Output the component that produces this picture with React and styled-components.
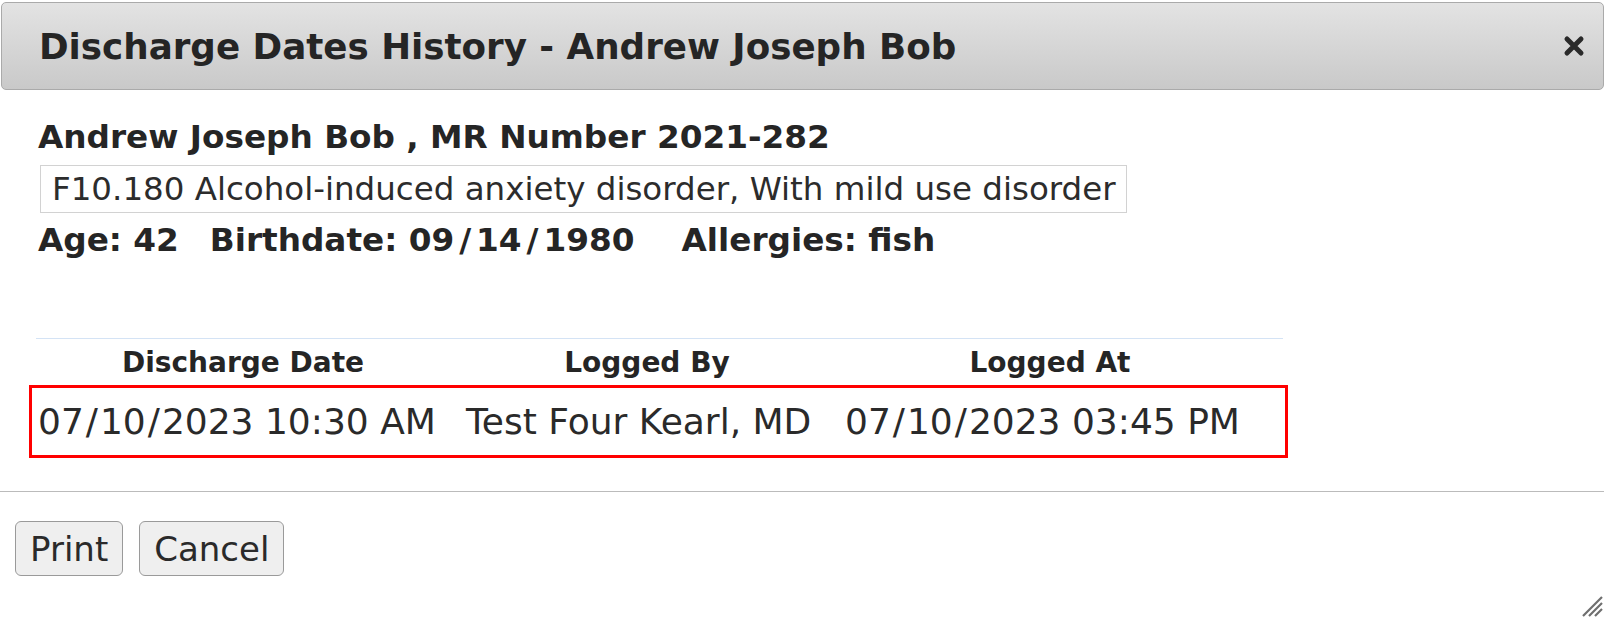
import React from "react";
import styled, { createGlobalStyle } from "styled-components";

const Global = createGlobalStyle`
  html, body { margin: 0; padding: 0; background: #fff; }
  body { font-family: "DejaVu Sans", Verdana, sans-serif; color: #222; }
`;

const Dialog = styled.div`
  width: 1604px;
  height: 618px;
  position: relative;
  display: flex;
  flex-direction: column;
  background: #fff;
`;

const TitleBar = styled.div`
  margin: 2px 0 0 1px;
  height: 86px;
  border: 1px solid #aaa;
  border-radius: 5px;
  background: linear-gradient(#e3e3e3, #c9c9c9);
  display: flex;
  align-items: center;
  justify-content: space-between;
  padding: 0 18px 0 37px;
`;

const Title = styled.div`
  font-size: 35.7px;
  font-weight: bold;
  color: #252525;
  white-space: nowrap;
`;

const CloseBtn = styled.button`
  border: 0;
  background: transparent;
  padding: 0;
  width: 22px;
  height: 22px;
  display: flex;
  cursor: pointer;
`;

const Body = styled.div`
  padding: 28px 0 0 38px;
  display: flex;
  flex-direction: column;
  align-items: flex-start;
`;

const BoldLine = styled.div`
  font-size: 32.7px;
  font-weight: bold;
  line-height: 38px;
  color: #252525;
  display: flex;
  white-space: nowrap;
  margin-top: ${(p) => p.$top || 0}px;
`;

const Spaced = styled.span`
  margin-right: ${(p) => p.$gap || 0}px;
`;

const Slash = styled.span`
  margin: 0 ${(p) => p.$m}px;
`;

const DiagBox = styled.div`
  margin: 9px 0 0 2px;
  width: 1074px;
  height: 46px;
  border: 1px solid #d2d2d2;
  padding-left: 11px;
  font-size: 32.5px;
  line-height: 46px;
  color: #2c2c2c;
  white-space: nowrap;
`;

const Table = styled.div`
  margin-top: 79px;
  margin-left: -2px;
  width: 1247px;
  border-top: 1px solid #d4e3f5;
`;

const HeadRow = styled.div`
  display: grid;
  grid-template-columns: 414px 394px 412px;
  height: 46px;
  align-items: center;
`;

const HeadCell = styled.div`
  text-align: center;
  font-size: 28px;
  font-weight: bold;
  color: #252525;
  white-space: nowrap;
`;

const DataRow = styled.div`
  display: grid;
  grid-template-columns: 414px 394px 412px;
  margin: 0 -5px 0 -7px;
  border: 3px solid #ff0000;
  padding: 0 2px 0 4px;
  height: 67px;
  align-items: center;
`;

const DataCell = styled.div`
  font-size: 36px;
  color: #2a2a2a;
  white-space: nowrap;
  padding-left: ${(p) => p.$pad}px;
`;

const Separator = styled.div`
  margin-top: 33px;
  height: 1px;
  background: #bbbbbb;
`;

const Footer = styled.div`
  display: flex;
  gap: 16px;
  padding: 29px 0 0 15px;
`;

const Button = styled.button`
  font-family: "DejaVu Sans", sans-serif;
  font-size: 34px;
  color: #2a2a2a;
  background: #efefef;
  border: 1px solid #9a9a9a;
  border-radius: 6px;
  height: 55px;
  padding: 0 14px;
  line-height: 1;
`;

const Grip = styled.svg`
  position: absolute;
  right: 1px;
  bottom: 1px;
`;

function Dated({ text, m }) {
  const parts = text.split("/");
  return parts.map((p, i) => (
    <React.Fragment key={i}>
      {p}
      {i < parts.length - 1 && <Slash $m={m}>/</Slash>}
    </React.Fragment>
  ));
}

export default function App() {
  return (
    <>
      <Global />
      <Dialog>
        <TitleBar>
          <Title>Discharge Dates History - Andrew Joseph Bob</Title>
          <CloseBtn aria-label="close">
            <svg width="22" height="22" viewBox="0 0 22 22">
              <path d="M4 4 L18 18 M18 4 L4 18" stroke="#2a2a2a" strokeWidth="5" strokeLinecap="round" />
            </svg>
          </CloseBtn>
        </TitleBar>
        <Body>
          <BoldLine>Andrew Joseph Bob , MR Number 2021-282</BoldLine>
          <DiagBox>F10.180 Alcohol-induced anxiety disorder, With mild use disorder</DiagBox>
          <BoldLine $top={8}>
            <Spaced $gap={31}>Age: 42</Spaced>
            <Spaced $gap={47}>
              Birthdate: <Dated text="09/14/1980" m={5} />
            </Spaced>
            <Spaced>Allergies: fish</Spaced>
          </BoldLine>
          <Table>
            <HeadRow>
              <HeadCell>Discharge Date</HeadCell>
              <HeadCell>Logged By</HeadCell>
              <HeadCell>Logged At</HeadCell>
            </HeadRow>
            <DataRow>
              <DataCell $pad={2}>
                <Dated text="07/10/2023 10:30 AM" m={2} />
              </DataCell>
              <DataCell $pad={16}>Test Four Kearl, MD</DataCell>
              <DataCell $pad={1}>
                <Dated text="07/10/2023 03:45 PM" m={2} />
              </DataCell>
            </DataRow>
          </Table>
        </Body>
        <Separator />
        <Footer>
          <Button>Print</Button>
          <Button>Cancel</Button>
        </Footer>
        <Grip width="24" height="24" viewBox="0 0 24 24">
          <path d="M23 4 L4 23 M23 10 L10 23 M23 16 L16 23" stroke="#6f6f6f" strokeWidth="2.2" />
        </Grip>
      </Dialog>
    </>
  );
}
